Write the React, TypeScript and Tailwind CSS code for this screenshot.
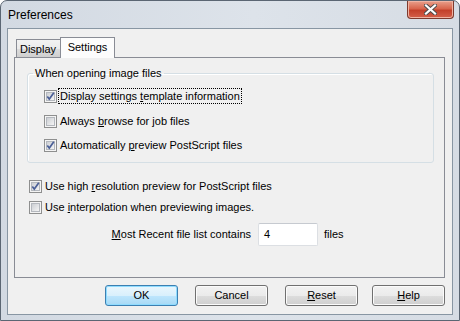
import { useId } from "react";

const font = "font-['Liberation_Sans',Arial,sans-serif]";

function Box({ checked }: { checked?: boolean }) {
  const id = useId();
  return (
    <svg width="13" height="13" viewBox="0 0 13 13" className="shrink-0">
      <defs>
        <linearGradient id={id} x1="0" y1="0" x2="1" y2="1">
          <stop offset="0" stopColor="#c9ccd1" />
          <stop offset="1" stopColor="#f7f7f7" />
        </linearGradient>
      </defs>
      <rect x="0.5" y="0.5" width="12" height="12" fill="#f4f4f4" stroke="#8e8f8f" />
      <rect x="2.5" y="2.5" width="8" height="8" fill={`url(#${id})`} stroke="#b4b8be" />
      {checked && (
        <path d="M3.3 6.4 L5.3 9 L9.8 2.8" fill="none" stroke="#4a5f97" strokeWidth="1.7" />
      )}
    </svg>
  );
}

function Check({
  checked,
  focus,
  children,
}: {
  checked?: boolean;
  focus?: boolean;
  children: React.ReactNode;
}) {
  return (
    <div className="flex h-[16px] items-center">
      <Box checked={checked} />
      <span
        className={`ml-[1px] px-[1px] leading-[14px] ${
          focus ? "border border-dotted border-black" : "border border-transparent"
        }`}
      >
        {children}
      </span>
    </div>
  );
}

function Button({ children, primary, className = "" }: { children: React.ReactNode; primary?: boolean; className?: string }) {
  return (
    <div
      className={`flex h-[21px] w-[73px] items-center justify-center rounded-[3px] border ${
        primary
          ? "border-[#3c7fb1] bg-[linear-gradient(#eaf6fd,#d9f0fc_50%,#bee6fd_51%,#a7d9f5)] shadow-[inset_0_0_0_1px_#8fdcff]"
          : "border-[#707070] bg-[linear-gradient(#f2f2f2,#ebebeb_50%,#dddddd_51%,#cfcfcf)] shadow-[inset_0_0_0_1px_#fbfbfb]"
      } ${className}`}
    >
      {children}
    </div>
  );
}

export default function App() {
  return (
    <div className={`${font} h-[321px] w-[460px] text-[11px] text-black`}>
      <div className="flex h-[321px] w-[460px] flex-col rounded-t-[7px] border border-[#5b6673] bg-[linear-gradient(90deg,#d2d9e2,#dde3ea_55%,#d6dce4)] pb-[5px]">
        <div className="flex h-[27px] items-start justify-between pl-[7px] pr-[5px]">
          <span className="mt-[7px] text-[12px] leading-[14px]">Preferences</span>
          <div className="flex h-[18px] w-[47px] items-center justify-center rounded-b-[4px] border border-t-0 border-[#7d3a2e] bg-[linear-gradient(#e9a08c,#d8654c_45%,#c3402a_55%,#d4604a)] shadow-[inset_0_0_0_1px_#f0b3a2]">
            <svg width="13" height="11" viewBox="0 0 13 11">
              <path d="M2 1.5 L11 9.5 M11 1.5 L2 9.5" stroke="#4b4b4b" strokeWidth="4" strokeLinecap="square" />
              <path d="M2 1.5 L11 9.5 M11 1.5 L2 9.5" stroke="#ffffff" strokeWidth="2.2" strokeLinecap="square" />
            </svg>
          </div>
        </div>

        <div className="flex-1 px-[6px]">
          <div className="flex h-full flex-col border border-[#8896a3] bg-[#f0f0f0] pl-[6px] pr-[7px] pt-[8px]">
            <div className="ml-[2px] flex h-[20px] items-end">
              <div className="flex h-[18px] w-[46px] items-center justify-center border border-b-0 border-[#898c95] bg-[linear-gradient(#f2f2f2,#ebebeb_50%,#dddddd_51%,#cfcfcf)] pr-[2px] pt-[1px]">
                Display
              </div>
              <div className="relative z-10 -mb-px ml-[-2px] flex h-[21px] w-[55px] items-center justify-center border border-b-0 border-[#898c95] bg-[#fcfcfc] pb-[2px]">
                Settings
              </div>
            </div>

            <div className="flex h-[221px] flex-col border border-[#898c95] bg-[#f0f0f0] pl-[12px] pr-[10px]">
              <fieldset className="mt-[9px] rounded-[3px] border border-[#d5dfe5] pb-[9px] shadow-[inset_1px_1px_0_#fff]">
                <legend className="ml-[5px] px-[2px] leading-[13px]">When opening image files</legend>
                <div className="pl-[16px]">
                  <div className="mt-[8px]">
                    <Check checked focus>
                      Display settings <u>t</u>emplate information
                    </Check>
                  </div>
                  <div className="mt-[9px]">
                    <Check>
                      Always <u>b</u>rowse for job files
                    </Check>
                  </div>
                  <div className="mt-[8px]">
                    <Check checked>
                      Automatically <u>p</u>review PostScript files
                    </Check>
                  </div>
                </div>
              </fieldset>

              <div className="ml-[2px] mt-[15px]">
                <Check checked>
                  Use high <u>r</u>esolution preview for PostScript files
                </Check>
              </div>
              <div className="ml-[2px] mt-[5px]">
                <Check>
                  Use <u>i</u>nterpolation when previewing images.
                </Check>
              </div>

              <div className="mt-[8px] flex h-[23px] items-center">
                <div className="w-[224px] text-right">
                  <u>M</u>ost Recent file list contains
                </div>
                <div className="ml-[7px] flex h-[23px] w-[60px] items-center rounded-[2px] border border-[#dcdfe3] border-t-[#c6cad0] bg-white pl-[5px]">
                  4
                </div>
                <span className="ml-[6px]">files</span>
              </div>
            </div>

            <div className="mt-[7px] flex justify-end">
              <Button primary>OK</Button>
              <Button className="ml-[17px]">Cancel</Button>
              <Button className="ml-[17px]">
                <span>
                  <u>R</u>eset
                </span>
              </Button>
              <Button className="ml-[14px]">
                <span>
                  <u>H</u>elp
                </span>
              </Button>
            </div>
          </div>
        </div>
      </div>
    </div>
  );
}
